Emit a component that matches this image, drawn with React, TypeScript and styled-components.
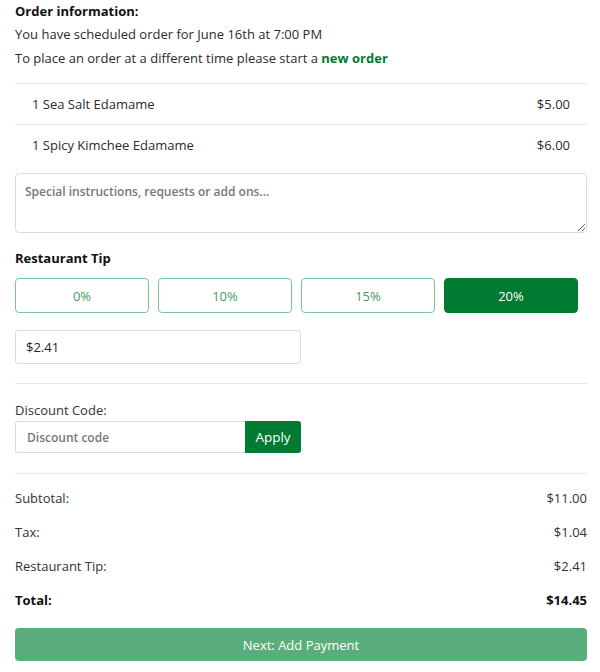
import React, { useState } from "react";
import styled, { createGlobalStyle } from "styled-components";

const Global = createGlobalStyle`
  html, body { margin: 0; padding: 0; background: #fff; }
  body { font-family: "Open Sans", "Noto Sans", Arial, sans-serif; color: #212529; }
  * { box-sizing: border-box; }
`;

const FONT = `"Open Sans", "Noto Sans", Arial, sans-serif`;
const GREEN = "#017a32";

const Page = styled.div`
  width: 587px;
  padding: 0 0 0 15px;
  font-size: 13px;
`;

const Heading = styled.div`
  font-weight: 700;
  font-size: 13px;
  line-height: 22px;
  color: #111;
`;

const Line = styled.div`
  line-height: 24px;
  color: #2b2b2b;
`;

const Link = styled.a`
  color: ${GREEN};
  font-weight: 700;
  text-decoration: none;
`;

const ItemList = styled.div`
  margin-top: 13px;
  border-top: 1px solid #e6e6e6;
`;

const Item = styled.div<{ $last?: boolean }>`
  display: flex;
  justify-content: space-between;
  align-items: center;
  height: 41px;
  padding: 0 17px;
  color: #2b2b2b;
  border-bottom: 1px solid ${(p) => (p.$last ? "transparent" : "#e6e6e6")};
`;

const TextArea = styled.textarea`
  display: block;
  width: 572px;
  height: 60px;
  margin-top: 7px;
  border: 1px solid #dcdcdc;
  border-radius: 4px;
  padding: 9px 9px;
  font-family: ${FONT};
  font-size: 12px;
  color: #212529;
  &::placeholder {
    color: #777;
    font-weight: 600;
  }
`;

const SectionLabel = styled.div`
  font-weight: 700;
  font-size: 13px;
  margin-top: 16px;
  line-height: 18px;
  color: #111;
`;

const TipRow = styled.div`
  display: flex;
  gap: 9px;
  margin-top: 11px;
`;

const TipButton = styled.button<{ $active?: boolean }>`
  width: 134px;
  height: 35px;
  border-radius: 4px;
  border: 1px solid ${(p) => (p.$active ? GREEN : "#7cc695")};
  background: ${(p) => (p.$active ? GREEN : "#fff")};
  color: ${(p) => (p.$active ? "#fff" : "#3f9c5e")};
  font-family: ${FONT};
  font-size: 13px;
  cursor: pointer;
`;

const TipInput = styled.input`
  display: block;
  width: 286px;
  height: 34px;
  margin-top: 17px;
  border: 1px solid #dcdcdc;
  border-radius: 3px;
  padding: 0 10px;
  font-family: ${FONT};
  font-size: 13px;
  color: #212529;
`;

const Divider = styled.hr<{ $top: number; $bottom: number }>`
  border: 0;
  border-top: 1px solid #e6e6e6;
  margin: ${(p) => `${p.$top}px 0 ${p.$bottom}px`};
  width: 572px;
`;

const Label = styled.div`
  line-height: 18px;
  color: #333;
`;

const DiscountRow = styled.div`
  display: flex;
  margin-top: 2px;
  width: 286px;
`;

const DiscountInput = styled.input`
  flex: 1;
  height: 32px;
  border: 1px solid #dcdcdc;
  border-right: 0;
  border-radius: 3px 0 0 3px;
  padding: 0 11px;
  font-family: ${FONT};
  font-size: 12px;
  &::placeholder {
    color: #777;
    font-weight: 600;
  }
`;

const ApplyButton = styled.button`
  width: 56px;
  height: 32px;
  border: 0;
  border-radius: 0 3px 3px 0;
  background: ${GREEN};
  color: #fff;
  font-family: ${FONT};
  font-size: 13.5px;
`;

const Totals = styled.div`
  display: flex;
  flex-direction: column;
  width: 572px;
`;

const TotalRow = styled.div<{ $bold?: boolean }>`
  display: flex;
  justify-content: space-between;
  align-items: center;
  height: 34px;
  font-weight: ${(p) => (p.$bold ? 700 : 400)};
  color: ${(p) => (p.$bold ? "#111" : "#333")};
`;

const NextButton = styled.button`
  display: block;
  width: 572px;
  height: 33px;
  margin-top: 11px;
  border: 0;
  border-radius: 4px;
  background: #5aae7b;
  color: #fff;
  font-family: ${FONT};
  font-size: 13px;
`;

export default function App() {
  const [tip, setTip] = useState("20%");
  const tips = ["0%", "10%", "15%", "20%"];
  return (
    <Page>
      <Global />
      <Heading>Order information:</Heading>
      <Line>You have scheduled order for June 16th at 7:00 PM</Line>
      <Line>
        To place an order at a different time please start a <Link href="#">new order</Link>
      </Line>
      <ItemList>
        <Item>
          <span>1 Sea Salt Edamame</span>
          <span>$5.00</span>
        </Item>
        <Item $last>
          <span>1 Spicy Kimchee Edamame</span>
          <span>$6.00</span>
        </Item>
      </ItemList>
      <TextArea placeholder="Special instructions, requests or add ons..." />
      <SectionLabel>Restaurant Tip</SectionLabel>
      <TipRow>
        {tips.map((t) => (
          <TipButton key={t} $active={tip === t} onClick={() => setTip(t)}>
            {t}
          </TipButton>
        ))}
      </TipRow>
      <TipInput defaultValue="$2.41" />
      <Divider $top={19} $bottom={17} />
      <Label>Discount Code:</Label>
      <DiscountRow>
        <DiscountInput placeholder="Discount code" />
        <ApplyButton>Apply</ApplyButton>
      </DiscountRow>
      <Divider $top={20} $bottom={7} />
      <Totals>
        <TotalRow><span>Subtotal:</span><span>$11.00</span></TotalRow>
        <TotalRow><span>Tax:</span><span>$1.04</span></TotalRow>
        <TotalRow><span>Restaurant Tip:</span><span>$2.41</span></TotalRow>
        <TotalRow $bold><span>Total:</span><span>$14.45</span></TotalRow>
      </Totals>
      <NextButton>Next: Add Payment</NextButton>
    </Page>
  );
}
